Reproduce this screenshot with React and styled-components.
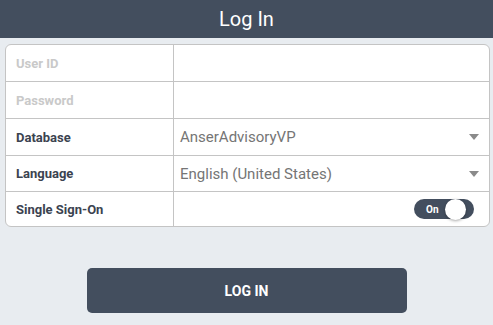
import React, { useState } from 'react'
import styled, { createGlobalStyle } from 'styled-components'

const GlobalStyle = createGlobalStyle`
  html, body {
    margin: 0;
    padding: 0;
    background: #e8ecf0;
    font-family: Roboto, 'Liberation Sans', sans-serif;
  }
`

const Page = styled.div`
  width: 493px;
  height: 325px;
  display: flex;
  flex-direction: column;
  background: #e8ecf0;
`

const Header = styled.div`
  height: 38px;
  background: #434e5e;
  color: #ffffff;
  font-size: 20px;
  display: flex;
  align-items: center;
  justify-content: center;
`

const Card = styled.div`
  margin: 6px 3px 0 5px;
  background: #ffffff;
  border: 1px solid #c4c4c4;
  border-radius: 6px;
  overflow: hidden;
`

const Row = styled.div`
  display: grid;
  grid-template-columns: 168px 1fr;
  height: ${props => props.h || 37}px;
  border-top: ${props => (props.first ? 'none' : '1px solid #c4c4c4')};
  box-sizing: border-box;
`

const Label = styled.div`
  display: flex;
  align-items: center;
  padding-left: 10px;
  border-right: 1px solid #c4c4c4;
  font-size: 13px;
  font-weight: 700;
  color: ${props => (props.muted ? '#c9c9c9' : '#3b4350')};
`

const Cell = styled.div`
  display: flex;
  align-items: center;
  justify-content: space-between;
  padding: 0 10px 0 6px;
`

const Value = styled.span`
  font-size: 15px;
  color: #757575;
`

const Caret = styled.span`
  width: 0;
  height: 0;
  border-left: 5px solid transparent;
  border-right: 5px solid transparent;
  border-top: 6px solid #8a8a8a;
`

const Toggle = styled.div`
  margin-left: auto;
  margin-right: 5px;
  width: 60px;
  height: 20px;
  border-radius: 10px;
  background: #434e5e;
  display: flex;
  align-items: center;
  justify-content: space-between;
  padding: 0 8px 0 12px;
  box-sizing: border-box;
  cursor: pointer;
`

const ToggleText = styled.span`
  color: #ffffff;
  font-size: 10px;
  font-weight: 700;
`

const Knob = styled.span`
  width: 21px;
  height: 21px;
  border-radius: 50%;
  background: #ffffff;
  box-shadow: 0 1px 3px rgba(0, 0, 0, 0.35);
`

const Footer = styled.div`
  display: flex;
  justify-content: center;
  padding-top: 41px;
`

const Button = styled.button`
  width: 320px;
  height: 45px;
  border: 0;
  border-radius: 5px;
  background: #434e5e;
  color: #ffffff;
  font-family: Roboto, 'Liberation Sans', sans-serif;
  font-size: 14px;
  font-weight: 700;
  cursor: pointer;
`

const fields = [
  { id: 'user', label: 'User ID', muted: true, h: 36 },
  { id: 'pass', label: 'Password', muted: true },
  { id: 'db', label: 'Database', value: 'AnserAdvisoryVP', select: true },
  { id: 'lang', label: 'Language', value: 'English (United States)', select: true, h: 36 }
]

export default function App() {
  const [sso, setSso] = useState(true)

  return (
    <Page>
      <GlobalStyle />
      <Header>Log In</Header>
      <Card>
        {fields.map((f, i) => (
          <Row key={f.id} first={i === 0} h={f.h}>
            <Label muted={f.muted}>{f.label}</Label>
            <Cell>
              {f.value && <Value>{f.value}</Value>}
              {f.select && <Caret />}
            </Cell>
          </Row>
        ))}
        <Row h={35}>
          <Label>Single Sign-On</Label>
          <Cell>
            <Toggle onClick={() => setSso(!sso)}>
              <ToggleText>{sso ? 'On' : 'Off'}</ToggleText>
              <Knob />
            </Toggle>
          </Cell>
        </Row>
      </Card>
      <Footer>
        <Button>LOG IN</Button>
      </Footer>
    </Page>
  )
}
